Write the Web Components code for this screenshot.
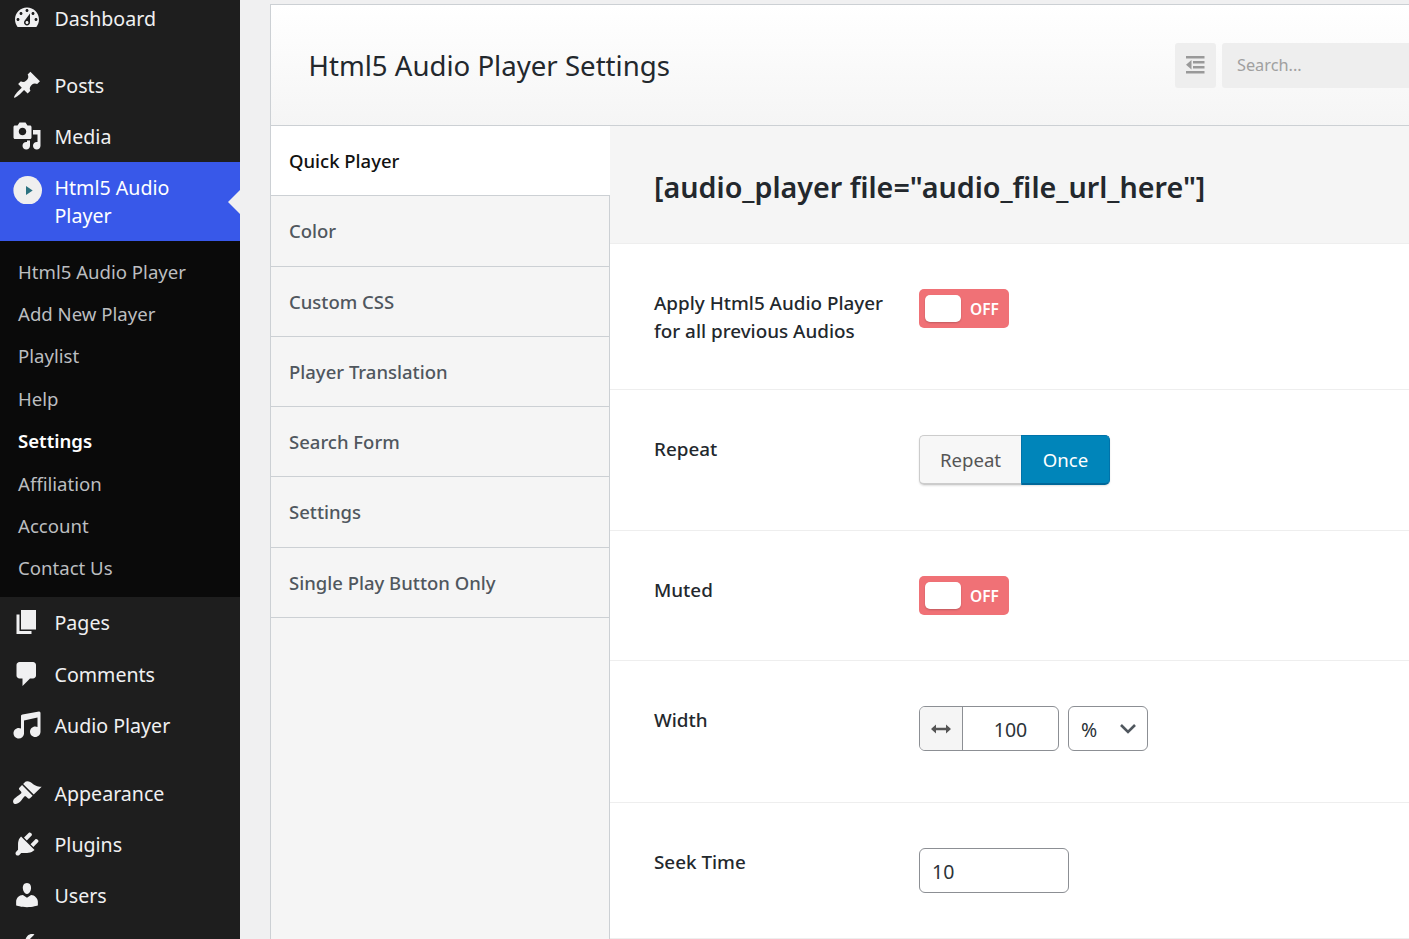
<!DOCTYPE html>
<html lang="en">
<head>
<meta charset="utf-8">
<title>Html5 Audio Player Settings</title>
<style>
  html, body { margin: 0; height: 939px; overflow: hidden; background: #f0f0f1; }
  body { font-family: "Noto Sans", "Open Sans", sans-serif; display: flex; }
</style>
</head>
<body>

<wp-sidebar>
  <wp-menu-item icon="dashboard" first>Dashboard</wp-menu-item>
  <wp-menu-item icon="post" gap="22">Posts</wp-menu-item>
  <wp-menu-item icon="media">Media</wp-menu-item>
  <wp-menu-item icon="player" current>Html5 Audio Player</wp-menu-item>
  <wp-submenu>
    <a>Html5 Audio Player</a>
    <a>Add New Player</a>
    <a>Playlist</a>
    <a>Help</a>
    <a class="on">Settings</a>
    <a>Affiliation</a>
    <a>Account</a>
    <a>Contact Us</a>
  </wp-submenu>
  <wp-menu-item icon="page" tall>Pages</wp-menu-item>
  <wp-menu-item icon="comments">Comments</wp-menu-item>
  <wp-menu-item icon="audio">Audio Player</wp-menu-item>
  <wp-menu-item icon="appearance" gap="17">Appearance</wp-menu-item>
  <wp-menu-item icon="plugins">Plugins</wp-menu-item>
  <wp-menu-item icon="users">Users</wp-menu-item>
  <wp-menu-item icon="tools"></wp-menu-item>
</wp-sidebar>

<settings-panel heading="Html5 Audio Player Settings">
  <tab-item active>Quick Player</tab-item>
  <tab-item>Color</tab-item>
  <tab-item>Custom CSS</tab-item>
  <tab-item>Player Translation</tab-item>
  <tab-item>Search Form</tab-item>
  <tab-item>Settings</tab-item>
  <tab-item>Single Play Button Only</tab-item>

  <shortcode-bar slot="content">[audio_player file="audio_file_url_here"]</shortcode-bar>
  <setting-row slot="content" height="146">
    <span slot="label">Apply Html5 Audio Player<br>for all previous Audios</span>
    <off-switch></off-switch>
  </setting-row>
  <setting-row slot="content" height="141">
    <span slot="label">Repeat</span>
    <repeat-buttons></repeat-buttons>
  </setting-row>
  <setting-row slot="content" height="130">
    <span slot="label">Muted</span>
    <off-switch></off-switch>
  </setting-row>
  <setting-row slot="content" height="142">
    <span slot="label">Width</span>
    <width-input></width-input>
  </setting-row>
  <setting-row slot="content" height="136">
    <span slot="label">Seek Time</span>
    <text-box>10</text-box>
  </setting-row>
</settings-panel>

<script>
  const ICONS = {
    dashboard: 'M3.76 16h12.48c1.1-1.37 1.76-3.11 1.76-5 0-4.42-3.58-8-8-8s-8 3.58-8 8c0 1.89.66 3.63 1.76 5zM10 4c.55 0 1 .45 1 1s-.45 1-1 1-1-.45-1-1 .45-1 1-1zM6 6c.55 0 1 .45 1 1s-.45 1-1 1-1-.45-1-1 .45-1 1-1zm8 0c.55 0 1 .45 1 1s-.45 1-1 1-1-.45-1-1 .45-1 1-1zm-5.37 5.55L12 7v6c0 1.1-.9 2-2 2s-2-.9-2-2c0-.57.24-1.08.63-1.45zM4 10c.55 0 1 .45 1 1s-.45 1-1 1-1-.45-1-1 .45-1 1-1zm12 0c.55 0 1 .45 1 1s-.45 1-1 1-1-.45-1-1 .45-1 1-1zm-5 3c0-.55-.45-1-1-1s-1 .45-1 1 .45 1 1 1 1-.45 1-1z',
    post: 'M10.44 3.02l1.82-1.82 6.36 6.35-1.83 1.82c-1.05-.68-2.48-.57-3.41.36l-.75.75c-.92.93-1.04 2.35-.35 3.41l-1.83 1.82-2.41-2.41-2.8 2.79c-.42.42-3.38 2.71-3.8 2.29s1.86-3.39 2.28-3.81l2.79-2.79L4.1 9.36l1.83-1.82c1.05.69 2.48.57 3.4-.36l.75-.75c.93-.92 1.05-2.35.36-3.41z',
    media: 'M13 11V4c0-.55-.45-1-1-1h-1.67L9 1H5L3.67 3H2c-.55 0-1 .45-1 1v7c0 .55.45 1 1 1h10c.55 0 1-.45 1-1zM7 4.5c1.38 0 2.5 1.12 2.5 2.5S8.38 9.5 7 9.5 4.5 8.38 4.5 7 5.62 4.5 7 4.5zM14 6h5v10.5c0 1.38-1.12 2.5-2.5 2.5S14 17.88 14 16.5s1.12-2.5 2.5-2.5c.17 0 .34.02.5.05V9h-3V6zm-4 8.05V13h2v3.5c0 1.38-1.12 2.5-2.5 2.5S7 17.88 7 16.5 8.12 14 9.5 14c.17 0 .34.02.5.05z',
    page: 'M6 15V2h10v13H6zm-1 1h8v2H3V5h2v11z',
    comments: 'M5 2h9c1.1 0 2 .9 2 2v7c0 1.1-.9 2-2 2h-2l-5 5v-5H5c-1.1 0-2-.9-2-2V4c0-1.1.9-2 2-2z',
    audio: 'M6.99 3.08l11.02-2c.55-.08.99.45.99 1V14.5c0 1.94-1.57 3.5-3.5 3.5S12 16.44 12 14.5c0-1.93 1.57-3.5 3.5-3.5.54 0 1.04.14 1.5.35V5.08l-9 2V16c-.24 1.7-1.74 3-3.5 3C2.57 19 1 17.44 1 15.5 1 13.57 2.57 12 4.5 12c.54 0 1.04.14 1.5.35V4.08c0-.55.44-.91.99-1z',
    appearance: 'M14.48 11.06L7.41 3.99l1.5-1.5c.5-.56 2.3-.47 3.51.32 1.21.8 1.43 1.28 2.91 2.1 1.18.64 2.45 1.26 4.45.85zM6.7 4.7L13.77 11.77 12 13.54c-.39.39-1.02.39-1.41 0l-1.06-1.06c-.39-.39-1.03-.39-1.42 0-.6.6-1.11 1.43-1.69 2.21-.26.35-.54.7-.85 1.01C3.9 17.5 1.5 17.7 1 16.6c-.5-1-.4-2.400 1.77-3.71.31-.31.66-.58 1.01-.84.78-.58 1.61-1.09 2.21-1.69.39-.39.39-1.03 0-1.42L4.93 7.88c-.39-.39-.39-1.02 0-1.41z',
    plugins: 'M13.11 4.36L9.87 7.6 8 5.73l3.24-3.24c.35-.34 1.05-.2 1.56.32.52.51.66 1.21.31 1.55zm-8 1.77l.91-1.12 9.01 9.01-1.19.84c-.71.71-2.63 1.16-3.82 1.16H6.14L4.9 17.26c-.59.59-1.54.59-2.12 0-.59-.58-.59-1.53 0-2.12l1.24-1.24v-3.88c0-1.13.4-3.19 1.09-3.89zm7.26 3.97l3.24-3.24c.34-.35 1.04-.21 1.55.31.52.51.66 1.21.31 1.55l-3.24 3.25z',
    users: 'M10 9.25c-2.27 0-2.73-3.44-2.73-3.44C7 4.02 7.82 2 9.97 2c2.16 0 2.98 2.02 2.71 3.81 0 0-.41 3.44-2.68 3.44zm0 2.57L12.72 10c2.39 0 4.52 2.33 4.52 4.53v2.49s-3.65 1.13-7.24 1.13c-3.65 0-7.24-1.13-7.24-1.13v-2.49c0-2.25 1.94-4.48 4.47-4.48z',
    tools: 'M16.68 9.77c-1.34 1.34-3.3 1.67-4.95.99l-5.41 6.52c-.99.99-2.59.99-3.58 0s-.99-2.59 0-3.57l6.52-5.42c-.68-1.65-.35-3.61.99-4.95 1.28-1.28 3.12-1.62 4.72-1.06l-2.89 2.89 2.82 2.82 2.86-2.87c.53 1.58.18 3.39-1.08 4.65z'
  };

  class WpSidebar extends HTMLElement {
    constructor() {
      super();
      this.attachShadow({ mode: 'open' }).innerHTML = `
        <style>
          :host { display: block; flex: none; width: 240px; height: 939px; overflow: hidden;
                  background: #1e1e1e; color: #f0f0f1; font-size: 19.600px; }
        </style>
        <slot></slot>`;
    }
  }

  class WpMenuItem extends HTMLElement {
    connectedCallback() {
      if (this.shadowRoot) return;
      const name = this.getAttribute('icon');
      const glyph = name === 'player'
        ? `<svg viewBox="0 0 30 30"><circle cx="15.700" cy="16.300" r="14.300" fill="#efefef"/><path d="M14 12l6.700 4.500-6.700 4.500z" fill="#2b7280"/></svg>`
        : `<svg viewBox="0 0 20 20"><path fill="#f0f0f1" fill-rule="evenodd" d="${ICONS[name]}"/></svg>`;
      this.attachShadow({ mode: 'open' }).innerHTML = `
        <style>
          :host { display: flex; align-items: center; position: relative; box-sizing: border-box;
                  height: 51px; padding-left: 12px; line-height: 28px; }
          :host([first]) { height: 38px; }
          :host([tall]) { height: 52px; }
          :host([current]) { height: 79px; background: #3858e9; color: #fff; align-items: flex-start; padding-top: 12px; }
          svg { flex: none; width: 30px; height: 30px; margin-right: 12.500px; margin-top: -2px; }
          .label { width: 150px; }
          :host([current]) svg { margin-top: 0; }
          .arrow { display: none; position: absolute; right: 0; top: 28px; border: 12px solid transparent;
                   border-right-color: #f0f0f1; border-left-width: 0; }
          :host([current]) .arrow { display: block; }
        </style>
        ${glyph}<span class="label"><slot></slot></span><span class="arrow"></span>`;
      if (this.hasAttribute('gap')) this.style.marginTop = this.getAttribute('gap') + 'px';
    }
  }

  class WpSubmenu extends HTMLElement {
    constructor() {
      super();
      this.attachShadow({ mode: 'open' }).innerHTML = `
        <style>
          :host { display: flex; flex-direction: column; box-sizing: border-box; height: 356px;
                  padding: 9px 0 8px 18px; background: #0a0a0a; color: #bcbec0; font-size: 18.600px; }
          ::slotted(a) { flex: 1; display: flex; align-items: center; }
          ::slotted(a.on) { color: #fff; font-weight: 600; }
        </style>
        <slot></slot>`;
    }
  }

  class SettingsPanel extends HTMLElement {
    constructor() {
      super();
      this.attachShadow({ mode: 'open' }).innerHTML = `
        <style>
          :host { display: flex; flex-direction: column; flex: 1; min-width: 0; box-sizing: border-box;
                  height: 939px; margin: 4px 0 0 30px; border: 1px solid #ccd0d4; border-right: 0;
                  border-bottom: 0; background: #f5f5f5; color: #23282d; }
          header { flex: none; display: flex; align-items: center; box-sizing: border-box; height: 121px;
                   padding: 0 0 0 37.500px; gap: 6px; border-bottom: 1px solid #ccd0d4;
                   background: linear-gradient(#fff, #f5f5f5); }
          h1 { flex: 1; margin: 0; font-size: 27.600px; font-weight: 400; color: #23282d; }
          .collapse { width: 41px; height: 45px; display: flex; align-items: center; justify-content: center;
                      background: #eee; border-radius: 3px; }
          .search { width: 187px; height: 45px; box-sizing: border-box; padding-left: 15px; display: flex;
                    align-items: center; background: #eee; border-radius: 3px 0 0 3px; color: #a0a0a0; font-size: 16.300px; }
          .body { flex: 1; display: flex; min-height: 0; }
          nav { flex: none; box-sizing: border-box; width: 339px; border-right: 1px solid #ccd0d4; }
          main { flex: 1; min-width: 0; margin-left: 0; }
        </style>
        <header>
          <h1></h1>
          <div class="collapse">
            <svg width="19" height="18" viewBox="0 0 19 18"><path fill="#999" d="M0 0h18.500v2.600H0zM0 15h18.500v2.600H0zM7 5h11.500v2.600H7zM7 10h11.500v2.600H7zM5.500 4v9.500L0 8.750z"/></svg>
          </div>
          <div class="search">Search...</div>
        </header>
        <div class="body">
          <nav><slot></slot></nav>
          <main><slot name="content"></slot></main>
        </div>`;
      this.shadowRoot.querySelector('h1').textContent = this.getAttribute('heading');
    }
  }

  class TabItem extends HTMLElement {
    constructor() {
      super();
      this.attachShadow({ mode: 'open' }).innerHTML = `
        <style>
          :host { display: flex; align-items: center; box-sizing: border-box; height: 70.280px; padding-left: 18px;
                  border-bottom: 1px solid #ccd0d4; font-size: 18.500px; font-weight: 500; color: #50575e; }
          :host([active]) { background: #fff; color: #111; margin-right: -1px; border-bottom-color: #ccd0d4; }
        </style>
        <slot></slot>`;
    }
  }

  class ShortcodeBar extends HTMLElement {
    constructor() {
      super();
      this.attachShadow({ mode: 'open' }).innerHTML = `
        <style>
          :host { display: flex; align-items: center; box-sizing: border-box; height: 118px; padding: 3px 0 0 44px;
                  border-bottom: 1px solid #eee; font-size: 28.700px; font-weight: 600; color: #23282d; white-space: nowrap; }
        </style>
        <slot></slot>`;
    }
  }

  class SettingRow extends HTMLElement {
    constructor() {
      super();
      this.attachShadow({ mode: 'open' }).innerHTML = `
        <style>
          :host { display: flex; box-sizing: border-box; padding: 45px 0 0 44px; background: #fff;
                  border-bottom: 1px solid #eee; }
          .label { flex: none; width: 265px; font-size: 18.850px; font-weight: 500; line-height: 28px; color: #23282d; }
        </style>
        <div class="label"><slot name="label"></slot></div>
        <div><slot></slot></div>`;
      this.style.height = this.getAttribute('height') + 'px';
    }
  }

  class OffSwitch extends HTMLElement {
    constructor() {
      super();
      this.attachShadow({ mode: 'open' }).innerHTML = `
        <style>
          :host { display: flex; align-items: center; box-sizing: border-box; width: 90px; height: 39px;
                  padding-left: 6px; gap: 9px; background: #f07176; border-radius: 5px; color: #fff;
                  font-size: 15.500px; font-weight: 600; }
          i { width: 36px; height: 27px; background: #fff; border-radius: 5px; box-shadow: 0 1px 2px rgba(0,0,0,.2); }
        </style>
        <i></i><span>OFF</span>`;
    }
  }

  class RepeatButtons extends HTMLElement {
    constructor() {
      super();
      this.attachShadow({ mode: 'open' }).innerHTML = `
        <style>
          :host { display: flex; width: 191px; height: 50px; font-size: 18.600px; border-radius: 5px;
                  box-shadow: 0 1px 2px rgba(0,0,0,.12); }
          span { display: flex; align-items: center; justify-content: center; box-sizing: border-box; }
          .off { width: 102px; background: #f7f7f7; color: #555; border: 1px solid #ccc; border-right: 0;
                 border-bottom-width: 2px; border-radius: 5px 0 0 5px; }
          .on { flex: 1; background: #0085ba; color: #fff; border: 1px solid #0073aa; border-bottom: 2px solid #006799;
                border-radius: 0 5px 5px 0; }
        </style>
        <span class="off">Repeat</span><span class="on">Once</span>`;
    }
  }

  class WidthInput extends HTMLElement {
    constructor() {
      super();
      this.attachShadow({ mode: 'open' }).innerHTML = `
        <style>
          :host { display: flex; gap: 9px; font-size: 19.500px; color: #2c3338; }
          div { display: flex; align-items: center; box-sizing: border-box; height: 45px; border: 1px solid #8c8f94; border-radius: 6px; }
          .group { width: 140px; overflow: hidden; }
          .addon { flex: none; width: 43px; height: 100%; display: flex; align-items: center; justify-content: center;
                   background: #f5f5f5; border-right: 1px solid #8c8f94; box-sizing: border-box; }
          .num { flex: 1; text-align: center; padding-top: 2px; }
          .unit { width: 80px; padding: 0 10px 0 12px; justify-content: space-between; }
          .unit span { padding-top: 2px; }
        </style>
        <div class="group">
          <span class="addon"><svg width="20" height="10" viewBox="0 0 20 10"><path fill="#555" d="M0 5l5-4.500V3.700h10V.500L20 5l-5 4.500V6.300H5v3.200z"/></svg></span>
          <span class="num">100</span>
        </div>
        <div class="unit">
          <span>%</span>
          <svg width="18" height="11" viewBox="0 0 18 11"><path fill="none" stroke="#50575e" stroke-width="2.600" d="M2 2l7 7 7-7"/></svg>
        </div>`;
    }
  }

  class TextBox extends HTMLElement {
    constructor() {
      super();
      this.attachShadow({ mode: 'open' }).innerHTML = `
        <style>
          :host { display: flex; align-items: center; box-sizing: border-box; width: 150px; height: 45px; padding: 2px 0 0 12px;
                  border: 1px solid #8c8f94; border-radius: 6px; font-size: 19.500px; color: #2c3338; }
        </style>
        <slot></slot>`;
    }
  }

  customElements.define('wp-sidebar', WpSidebar);
  customElements.define('wp-menu-item', WpMenuItem);
  customElements.define('wp-submenu', WpSubmenu);
  customElements.define('settings-panel', SettingsPanel);
  customElements.define('tab-item', TabItem);
  customElements.define('shortcode-bar', ShortcodeBar);
  customElements.define('setting-row', SettingRow);
  customElements.define('off-switch', OffSwitch);
  customElements.define('repeat-buttons', RepeatButtons);
  customElements.define('width-input', WidthInput);
  customElements.define('text-box', TextBox);
</script>
</body>
</html>
